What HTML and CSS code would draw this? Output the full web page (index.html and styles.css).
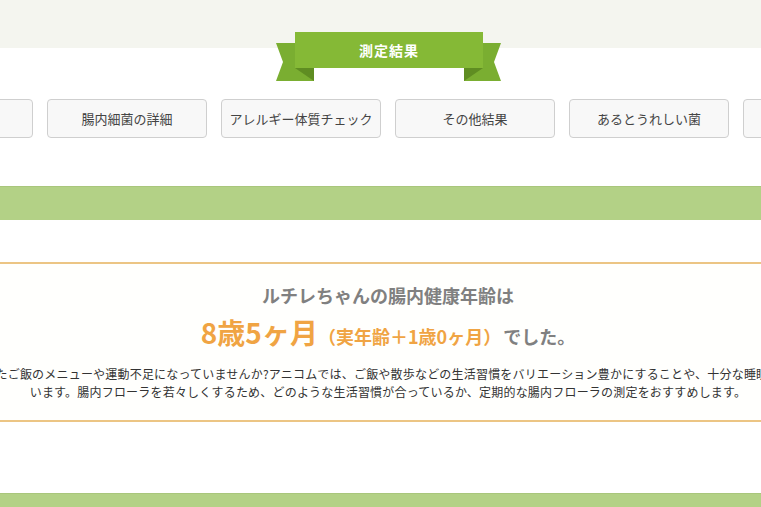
FILE: index.html
```html
<!DOCTYPE html>
<html>
<head>
  <title>測定結果</title>
  <link rel="stylesheet" href="styles.css">
</head>
<body>
  <div class="page">
    <div class="top-band"></div>

    <div class="ribbon">
      <svg width="225" height="50" viewBox="0 0 225 50">
        <polygon points="0,11 38,11 38,49 0,49 7,30" fill="#7aae31"/>
        <polygon points="188,11 225,11 218,30 225,49 188,49" fill="#7aae31"/>
        <polygon points="19,36 38,36 38,49" fill="#5f8d22"/>
        <polygon points="188,36 207,36 188,49" fill="#5f8d22"/>
        <rect x="19" y="0" width="188" height="36" fill="#85b936"/>
        <text x="113" y="24" text-anchor="middle" class="ribbon-text">測定結果</text>
      </svg>
    </div>

    <nav class="tabs">
      <button class="tab">健康年齢</button>
      <button class="tab">腸内細菌の詳細</button>
      <button class="tab">アレルギー体質チェック</button>
      <button class="tab">その他結果</button>
      <button class="tab">あるとうれしい菌</button>
      <button class="tab">過去の結果</button>
    </nav>

    <div class="green-bar"></div>

    <div class="result">
      <p class="result-title">ルチレちゃんの腸内健康年齢は</p>
      <p class="result-age">
        <span class="age">8歳5ヶ月</span><span class="age-diff">（実年齢＋1歳0ヶ月）</span>でした。
      </p>
      <p class="result-text">
        毎日のストレスや、偏ったご飯のメニューや運動不足になっていませんか?アニコムでは、ご飯や散歩などの生活習慣をバリエーション豊かにすることや、十分な睡眠をとることをおすすめして<br>
        います。腸内フローラを若々しくするため、どのような生活習慣が合っているか、定期的な腸内フローラの測定をおすすめします。
      </p>
    </div>

    <div class="green-bar bottom"></div>
  </div>
</body>
</html>
```

FILE: styles.css
```css
body {
  margin: 0;
  padding: 0;
  background-color: #fff;
  font-family: "Noto Sans CJK JP", "Noto Sans", sans-serif;
  overflow: hidden;
}

.page {
  width: 1100px;
  margin-left: -162px;
}

.top-band {
  height: 48px;
  background-color: #f4f5ef;
}

.ribbon {
  display: flex;
  justify-content: center;
  margin-top: -16px;
  height: 50px;
}

.ribbon svg {
  display: block;
}

.ribbon-text {
  fill: #fff;
  font-family: "Noto Sans CJK JP", sans-serif;
  font-size: 14px;
  font-weight: bold;
  letter-spacing: 1px;
}

.tabs {
  display: flex;
  justify-content: center;
  gap: 14px;
  margin-top: 17px;
}

.tab {
  width: 160px;
  height: 39px;
  background-color: #f8f8f8;
  border: 1px solid #cfcfcf;
  border-radius: 4px;
  color: #444;
  font-family: "Noto Sans CJK JP", sans-serif;
  font-size: 13px;
  padding: 0;
}

.green-bar {
  height: 33px;
  margin-top: 48px;
  background-color: #b3d186;
  border-top: 1px solid #a9c67c;
}

.green-bar.bottom {
  margin-top: 71px;
  height: 40px;
}

.result {
  margin-top: 42px;
  border-top: 2px solid #ecc584;
  border-bottom: 2px solid #ecc584;
  background-color: #fffffd;
  padding: 18px 0 19px;
  text-align: center;
}

.result p {
  margin: 0;
}

.result-title {
  font-size: 18px;
  line-height: 26px;
  font-weight: bold;
  color: #808080;
}

.result-age {
  margin-top: 6px !important;
  font-size: 18px;
  line-height: 36px;
  font-weight: bold;
  color: #808080;
}

.age {
  font-size: 28px;
  color: #f0a443;
}

.age-diff {
  font-size: 18px;
  color: #f0a443;
  margin-right: 2px;
}

.result-text {
  margin-top: 11px !important;
  font-size: 12px;
  letter-spacing: 0.2px;
  line-height: 18px;
  color: #333;
  white-space: nowrap;
}
```
